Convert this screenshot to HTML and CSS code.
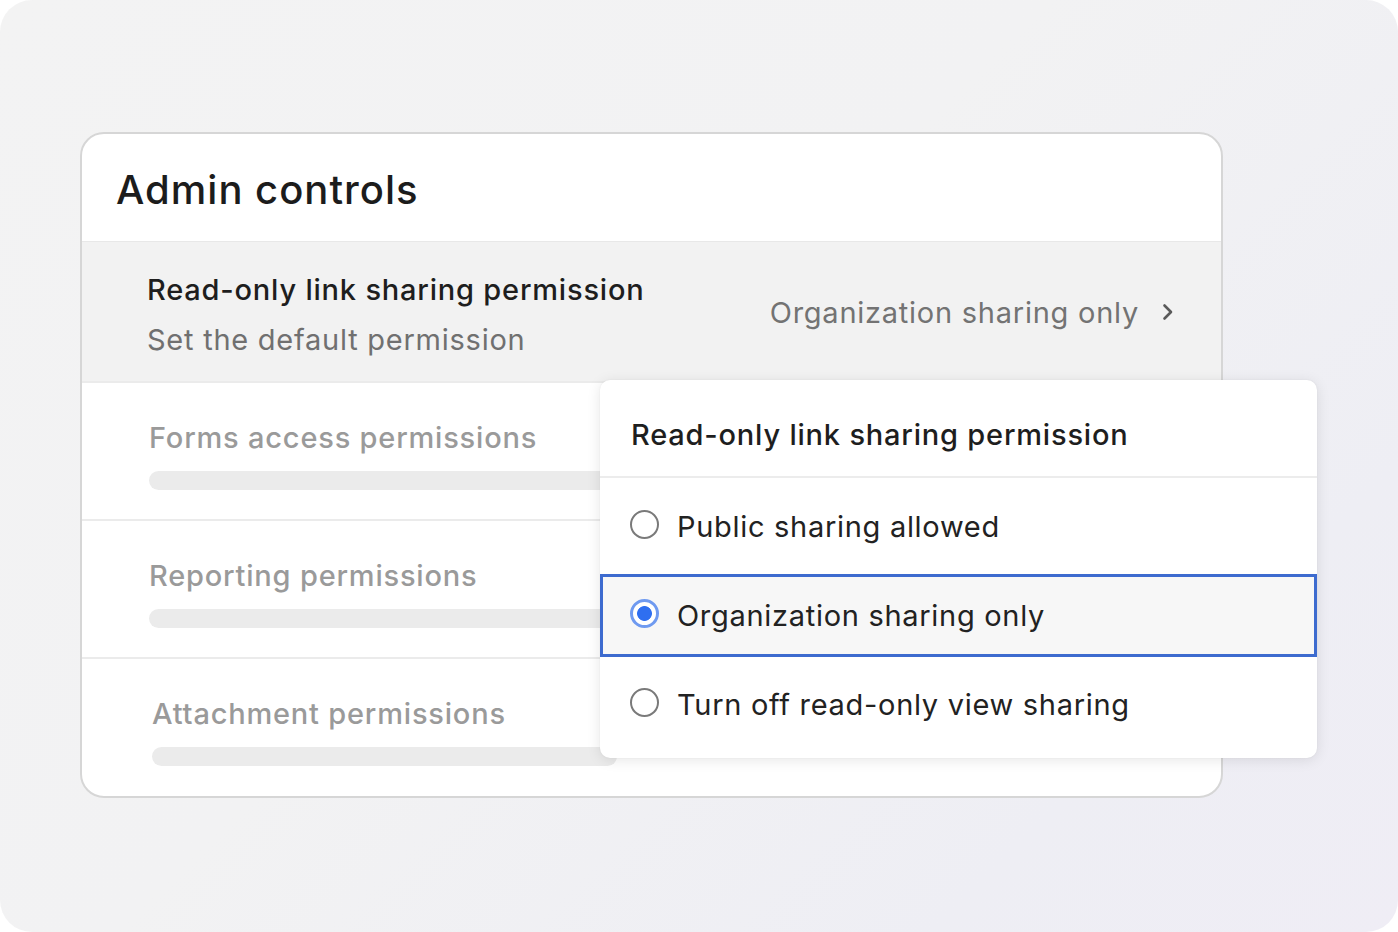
FILE: index.html
```html
<!DOCTYPE html>
<html>
<head>
<meta charset="utf-8">
<link rel="stylesheet" href="styles.css">
</head>
<body>
<div class="frame">
  <div class="card">
    <div class="card-head">Admin controls</div>
    <div class="row row-active">
      <div class="row-text">
        <div class="row-title">Read-only link sharing permission</div>
        <div class="row-sub">Set the default permission</div>
      </div>
      <div class="row-value">
        <span>Organization sharing only</span>
        <svg class="chev" width="14" height="20" viewBox="0 0 14 20"><path d="M3.5 3.5 L10 10 L3.5 16.5" fill="none" stroke="#5a5a5a" stroke-width="2.6" stroke-linecap="round" stroke-linejoin="round"/></svg>
      </div>
    </div>
    <div class="row row-muted">
      <div class="muted-title">Forms access permissions</div>
      <div class="bar"></div>
    </div>
    <div class="row row-muted">
      <div class="muted-title">Reporting permissions</div>
      <div class="bar"></div>
    </div>
    <div class="row row-muted last">
      <div class="muted-title shift">Attachment permissions</div>
      <div class="bar shift"></div>
    </div>

    <div class="popup">
      <div class="popup-head">Read-only link sharing permission</div>
      <div class="opt">
        <span class="radio"></span>
        <span>Public sharing allowed</span>
      </div>
      <div class="opt opt-selected">
        <span class="radio radio-on"></span>
        <span>Organization sharing only</span>
      </div>
      <div class="opt opt-last">
        <span class="radio"></span>
        <span>Turn off read-only view sharing</span>
      </div>
    </div>
  </div>
</div>
</body>
</html>
```

FILE: styles.css
```css
* { box-sizing: border-box; }
html, body { margin: 0; padding: 0; background: #ffffff; }
body {
  font-family: Inter, "Noto Sans", "Liberation Sans", sans-serif;
  width: 1398px;
  height: 932px;
  overflow: hidden;
}
.frame {
  width: 1398px;
  height: 932px;
  border-radius: 32px;
  background: linear-gradient(135deg, #f3f3f3 0%, #f2f2f3 45%, #eeeef4 80%, #efedf5 100%);
  padding: 132px 0 0 80px;
}
.card {
  position: relative;
  width: 1143px;
  height: 666px;
  background: #ffffff;
  border: 2px solid #d6d6d6;
  border-radius: 24px;
  display: flex;
  flex-direction: column;
}
.card-head {
  height: 108px;
  padding: 31px 0 0 34px;
  font-size: 40px;
  font-weight: 500;
  color: #1c1c1c;
  letter-spacing: 1px;
  border-bottom: 1px solid #e8e8e8;
}
.row {
  height: 140px;
  border-bottom: 2px solid #ebebeb;
}
.row.last { border-bottom: none; flex: 1; }
.row-active {
  background: #f2f2f2;
  display: flex;
  align-items: center;
  justify-content: space-between;
  padding: 0 46px 0 65px;
  height: 141px;
}
.row-title {
  font-size: 29px;
  font-weight: 500;
  color: #1e1e1e;
  letter-spacing: 0.8px;
  line-height: 34px;
  margin-top: 6px;
}
.row-sub {
  font-size: 29px;
  color: #707070;
  letter-spacing: 0.75px;
  line-height: 34px;
  margin-top: 16px;
}
.row-value {
  display: flex;
  align-items: center;
  gap: 22px;
  font-size: 29px;
  letter-spacing: 0.75px;
  color: #737373;
  margin-top: 2px;
}
.chev { margin-top: -2px; }
.row-muted {
  padding: 38px 0 0 67px;
  height: 138px;
}
.muted-title {
  font-size: 29px;
  font-weight: 500;
  color: #9a9a9a;
  letter-spacing: 0.8px;
  line-height: 34px;
}
.bar {
  margin-top: 16px;
  width: 465px;
  height: 19px;
  border-radius: 10px;
  background: #ebebeb;
}
.shift { margin-left: 3px; }
.popup {
  position: absolute;
  left: 518px;
  top: 246px;
  width: 717px;
  height: 378px;
  background: #ffffff;
  border-radius: 10px;
  box-shadow: 0 2px 14px rgba(0, 0, 0, 0.10), 0 0 2px rgba(0, 0, 0, 0.06);
  display: flex;
  flex-direction: column;
  overflow: hidden;
}
.popup-head {
  height: 98px;
  padding: 38px 0 0 31px;
  font-size: 29px;
  font-weight: 500;
  color: #1e1e1e;
  letter-spacing: 0.8px;
  line-height: 34px;
  border-bottom: 2px solid #ececec;
}
.opt {
  display: flex;
  align-items: center;
  gap: 18px;
  padding-left: 30px;
  font-size: 29px;
  letter-spacing: 0.7px;
  color: #222222;
  height: 96px;
}
.opt-selected {
  height: 83px;
  background: #f7f7f7;
  border: 3px solid #3d6bcf;
  padding-left: 27px;
}
.opt-last { flex: 1; padding-bottom: 6px; }
.radio {
  width: 29px;
  height: 29px;
  border-radius: 50%;
  border: 2px solid #7a7a7a;
  flex: none;
  margin-top: -4px;
}
.radio-on {
  border: 3px solid #6f9af0;
  background: radial-gradient(circle, #2f6ff0 0 7px, #ffffff 7.8px);
}
```
